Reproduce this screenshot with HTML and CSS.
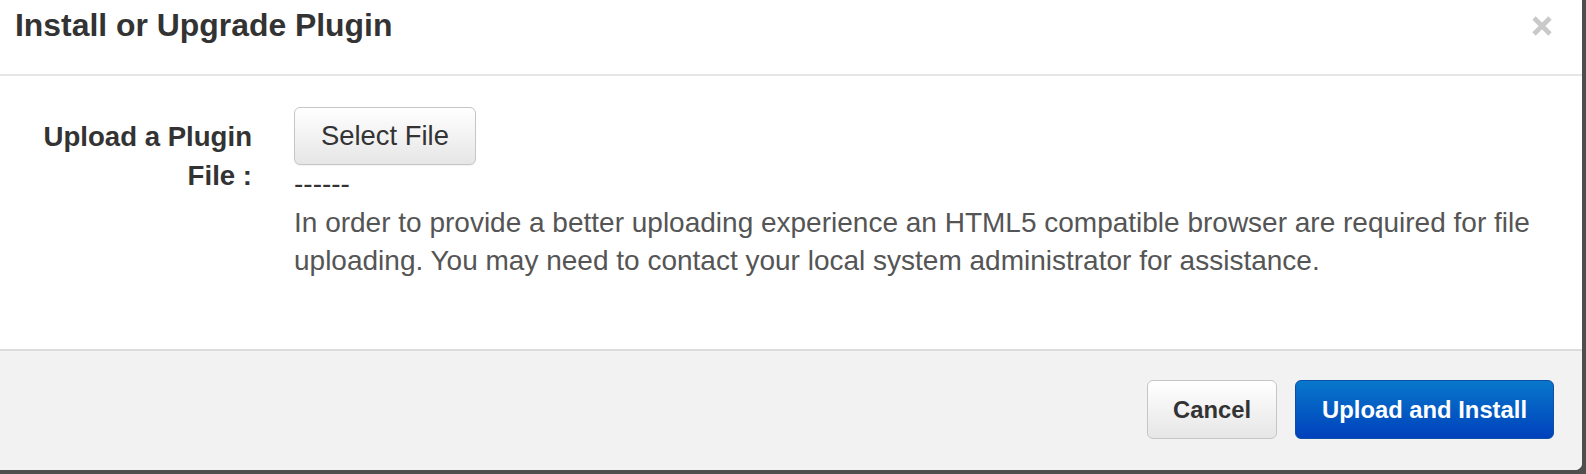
FILE: index.html
```html
<!DOCTYPE html>
<html lang="en">
<head>
<meta charset="utf-8">
<title>Install or Upgrade Plugin</title>
<link rel="stylesheet" href="styles.css">
</head>
<body>
<div class="modal">
  <div class="modal-header">
    <h3 class="modal-title">Install or Upgrade Plugin</h3>
    <button class="close" aria-label="Close">
      <svg width="20" height="20" viewBox="0 0 20 20"><path d="M2 2 L18 18 M18 2 L2 18" stroke="#c9c9c9" stroke-width="4.6" fill="none"/></svg>
    </button>
  </div>
  <div class="modal-body">
    <div class="form-row">
      <label class="form-label">Upload a Plugin File :</label>
      <div class="form-control">
        <button class="btn btn-select">Select File</button>
        <div class="dashes">------</div>
        <p class="help">In order to provide a better uploading experience an HTML5 compatible browser are required for file uploading. You may need to contact your local system administrator for assistance.</p>
      </div>
    </div>
  </div>
  <div class="modal-footer">
    <button class="btn btn-cancel">Cancel</button>
    <button class="btn btn-primary">Upload and Install</button>
  </div>
</div>
</body>
</html>
```

FILE: styles.css
```css
html, body {
  margin: 0;
  padding: 0;
}
body {
  background: #4e4e4e;
  font-family: "Liberation Sans", Arial, Helvetica, sans-serif;
  width: 1586px;
  height: 474px;
  overflow: hidden;
}
.modal {
  width: 1582px;
  height: 470px;
  background: #fff;
  display: flex;
  flex-direction: column;
  border-bottom-right-radius: 7px;
  overflow: hidden;
}
.modal-header {
  box-sizing: border-box;
  height: 76px;
  border-bottom: 2px solid #e6e6e6;
  padding: 7px 30px 0 15px;
  display: flex;
  justify-content: space-between;
  align-items: flex-start;
}
.modal-title {
  margin: 0;
  font-size: 31.9px;
  line-height: 36px;
  font-weight: bold;
  color: #333;
}
.close {
  margin-top: 9px;
  padding: 0;
  border: 0;
  background: none;
  width: 20px;
  height: 20px;
  display: block;
}
.close svg {
  display: block;
}
.modal-body {
  flex: 1;
  padding: 31px 0 0 20px;
}
.form-row {
  display: grid;
  grid-template-columns: 232px 1fr;
  column-gap: 42px;
}
.form-label {
  padding-top: 10px;
  text-align: right;
  font-size: 27.6px;
  line-height: 39px;
  font-weight: bold;
  color: #333;
}
.form-control {
  font-size: 28px;
  line-height: 38.5px;
}
.btn {
  font-family: "Liberation Sans", Arial, Helvetica, sans-serif;
  border: 1px solid #c6c6c6;
  border-radius: 6px;
  background: linear-gradient(#ffffff, #e6e6e6);
  color: #333;
  cursor: pointer;
  display: block;
}
.btn-select {
  font-size: 27.4px;
  line-height: 32px;
  padding: 12px 26px;
  box-shadow: 0 1px 1px rgba(0,0,0,0.05);
}
.dashes {
  color: #333;
}
.help {
  margin: 0;
  width: 1260px;
  color: #555;
}
.modal-footer {
  box-sizing: border-box;
  height: 121px;
  border-top: 2px solid #dcdcdc;
  background: #f2f2f2;
  padding: 29px 28px 0 0;
  display: flex;
  justify-content: flex-end;
  align-items: flex-start;
  column-gap: 18px;
}
.btn-cancel,
.btn-primary {
  font-size: 23.8px;
  line-height: 29px;
  font-weight: bold;
  padding: 14px 25px;
}
.btn-primary {
  padding: 14px 26px;
  color: #fff;
  border-color: #0b4fa6;
  background: linear-gradient(#0877cc, #0041bb);
}
```
